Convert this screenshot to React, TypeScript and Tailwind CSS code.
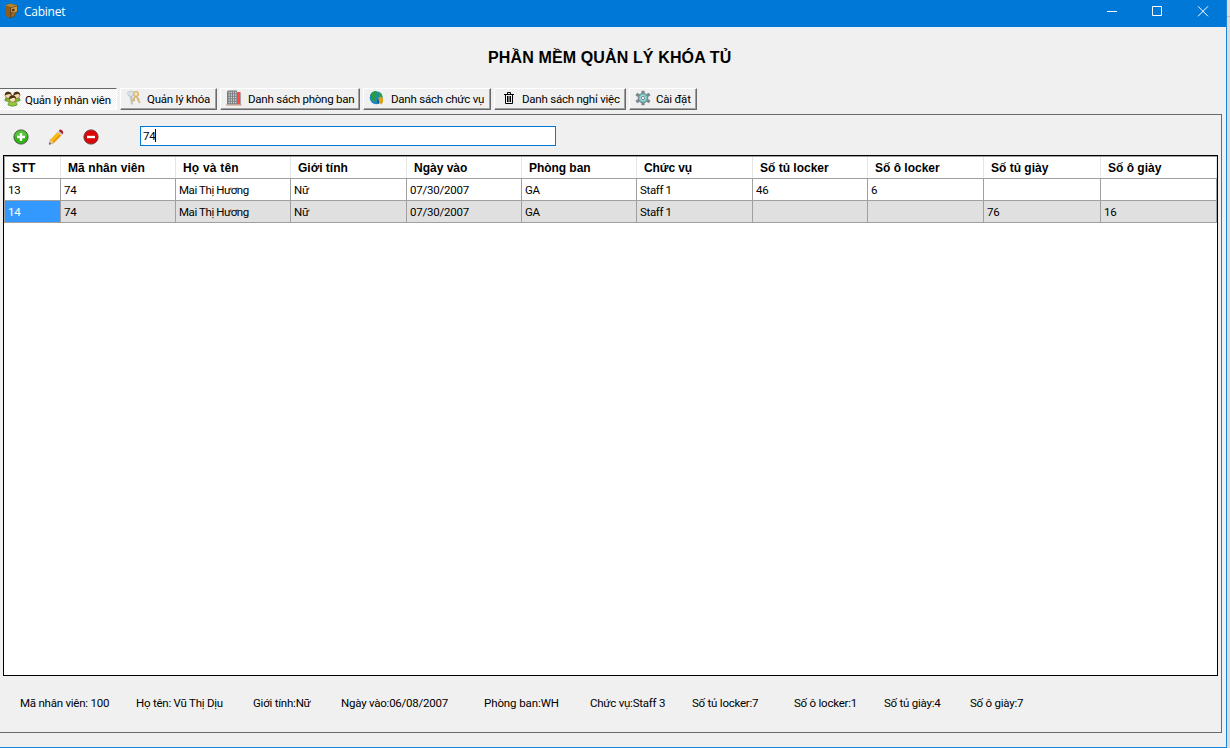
import type { ReactNode } from "react";

function PeopleIcon() {
  return (
    <svg width="17" height="16" viewBox="0 0 17 16" className="block">
      <path d="M0.8 9.5q0-3 3.4-3t3.4 3q-3.4 2-6.8 0zM9.4 9.5q0-3 3.4-3t3.4 3q-3.4 2-6.8 0z" fill="#7db82c" stroke="#4d7a18" strokeWidth="0.6" />
      <circle cx="4.2" cy="4.2" r="3.1" fill="#f3d9ae" stroke="#7a5520" strokeWidth="0.6" />
      <circle cx="12.8" cy="4.2" r="3.1" fill="#f3d9ae" stroke="#7a5520" strokeWidth="0.6" />
      <path d="M0.8 4.2Q0.9 0.5 4.2 0.7T7.6 4.2Q6 2.6 4.2 3.2T0.8 4.2zM9.4 4.2Q9.5 0.5 12.8 0.7T16.2 4.2Q14.6 2.6 12.8 3.2T9.4 4.2z" fill="#4a2f12" />
      <path d="M4 14q0-4 4.5-4t4.5 4q-4.5 2.6-9 0z" fill="#8fcb3a" stroke="#4d7a18" strokeWidth="0.6" />
      <circle cx="8.5" cy="8" r="3.2" fill="#f8dfb8" stroke="#7a5520" strokeWidth="0.6" />
      <path d="M5 8Q5.2 4.2 8.5 4.3T12 8Q10.3 6.2 8.5 6.9T5 8z" fill="#4a2f12" />
    </svg>
  );
}

function KeysIcon() {
  return (
    <svg width="16" height="16" viewBox="0 0 16 16" className="block">
      <path d="M4.2 6L5.4 13.5L6.3 14.5L6 5.5z" fill="#cbd3d9" stroke="#a9b4bb" strokeWidth="0.7" />
      <path d="M1.5 2.5Q4 0.4 7.5 1.8L8 4.5L5.5 6.5L2.5 6z" fill="#dbe3e8" stroke="#b8c2c9" strokeWidth="0.8" />
      <path d="M9.5 6L6.2 11.5M10.3 6L13.8 13" stroke="#d9b878" strokeWidth="1.7" />
      <circle cx="10" cy="4" r="2.4" fill="#f3e5c3" stroke="#d8b56c" strokeWidth="1.3" />
      <path d="M7.5 9.5L9 10.8M12 9.5L13.4 8.8" stroke="#d1a75c" strokeWidth="1.1" />
    </svg>
  );
}

function BuildingIcon() {
  return (
    <svg width="16" height="16" viewBox="0 0 16 16" className="block">
      <path d="M1 1.5L2.5 0.5H11L11.5 14.5H1z" fill="#777b7c" />
      <path d="M11 2H14.5L15 14.5H11z" fill="#ff4547" />
      <path d="M14.6 3V14.5" stroke="#a6a9aa" />
      <path d="M2.5 2.5H11M2.5 5H11M2.5 7.5H11M2.5 10H11M2.5 12.5H11" stroke="#d5d8d8" strokeWidth="1.3" strokeDasharray="1.3 0.9" />
      <path d="M0 15H15.5" stroke="#b9947b" strokeWidth="1" />
    </svg>
  );
}

function GlobeIcon() {
  return (
    <svg width="16" height="16" viewBox="0 0 16 16" className="block">
      <circle cx="7.2" cy="7.7" r="6.5" fill="#168ac4" />
      <path d="M1.3 5Q3 1.2 7 1.1L8.2 3L6.5 4.5L8 6.5L6.3 9L5.8 12L3.5 10.5L2.5 7.5z" fill="#2c9a44" />
      <path d="M9.5 2L12.5 4L13.5 7L11 8L9.2 5.5z" fill="#2fa04a" />
      <path d="M9.5 8L11.5 6.5L14 8V12L12.5 14.5L10.5 13L9.5 11z" fill="#d6a21c" />
      <path d="M8.8 9.5L9.3 13.5" stroke="#123f82" strokeWidth="1.2" />
    </svg>
  );
}

function TrashIcon() {
  return (
    <svg width="12" height="14" viewBox="0 0 12 14" className="block" fill="none" stroke="#000" strokeWidth="1">
      <path d="M1 3.5H11M4.5 3V1.5H7.5V3M2.5 3.5V12.5H9.5V3.5M4.5 5V11M6 5V11M7.5 5V11" />
    </svg>
  );
}

function GearIcon() {
  return (
    <svg width="16" height="16" viewBox="0 0 16 16" className="block">
      <g stroke="#7b878b" strokeWidth="3.2">
        <path d="M8 0.8V15.2M1.3 4.2L14.7 11.8M1.3 11.8L14.7 4.2" />
      </g>
      <circle cx="8" cy="8" r="5.3" fill="#7d8a8f" />
      <circle cx="8" cy="8" r="3.6" fill="#a9dcd9" stroke="#6fc4c0" strokeWidth="1.3" />
      <circle cx="8" cy="8" r="1.7" fill="#eef2f2" stroke="#60757a" strokeWidth="0.8" />
    </svg>
  );
}

function CabinetIcon() {
  return (
    <svg width="16" height="16" viewBox="0 0 16 16" className="block">
      <path d="M1 2.5L6 0.5L13.8 2.5V9L11 10.5V13L6.5 15.5L1.5 12.5z" fill="#6b451c" />
      <path d="M1 2.5L6 0.5L13.8 2.5L7 4.5z" fill="#b5832c" />
      <path d="M1 2.7L6 4.5V15L1.5 12.5z" fill="#8c5c1e" />
      <path d="M7.2 5L13 3.6V8.2L10.5 9.8L7.2 9z" fill="#d29b3c" />
      <path d="M8 6.2L10.5 5.6V8.2L8 8.3z" fill="#4c3420" />
      <path d="M7.2 10.5L10.5 10V12.6L7.2 14.2z" fill="#9c6b27" />
    </svg>
  );
}

function AddIcon() {
  return (
    <svg width="16" height="16" viewBox="0 0 16 16" className="block">
      <circle cx="8" cy="8" r="7.1" fill="#2fb414" stroke="#4e5b4a" strokeWidth="1" />
      <path d="M2 7.5A6 6 0 0 1 14 7.5Q8 9.5 2 7.5z" fill="#6bd04c" opacity="0.6" />
      <path d="M8 4V12M4 8H12" stroke="#fff" strokeWidth="2.4" />
    </svg>
  );
}

function PencilIcon() {
  return (
    <svg width="16" height="16" viewBox="0 0 16 16" className="block">
      <path d="M1 15.5L2.3 10.5L5.8 14z" fill="#eccb9c" stroke="#b89263" strokeWidth="0.5" />
      <path d="M1 15.5L1.6 13.3L3.3 14.9z" fill="#555" />
      <path d="M2.3 10.5L9.5 3L13.3 6.5L5.8 14z" fill="#fbb917" />
      <path d="M4.8 12.5L11.8 5.2L13.3 6.5L5.8 14z" fill="#e89b12" />
      <path d="M9.5 3L10.8 1.7L14.5 5.2L13.3 6.5z" fill="#c9ccd0" />
      <path d="M10.8 1.7L12 0.5Q15 0.8 15.2 4L14.5 5.2z" fill="#a81e2c" />
    </svg>
  );
}

function RemoveIcon() {
  return (
    <svg width="16" height="16" viewBox="0 0 16 16" className="block">
      <circle cx="8" cy="8" r="7.1" fill="#dc0508" stroke="#6b3a3a" strokeWidth="1" />
      <path d="M4 8H12" stroke="#fff" strokeWidth="2.4" />
    </svg>
  );
}

type TabProps = { width: string; icon: ReactNode; iconBox: string; label: string; active?: boolean };

function Tab({ width, icon, iconBox, label, active }: TabProps) {
  const look = active
    ? "border-t border-r border-b border-t-[#696969] border-r-white border-b-white bg-[repeating-conic-gradient(#fff_0_25%,#f0f0f0_0_50%)] bg-[length:2px_2px]"
    : "border border-t-white border-l-white border-r-[#696969] border-b-[#696969] bg-[#f0f0f0] shadow-[inset_-1px_-1px_0_#a0a0a0]";
  return (
    <button className={`flex h-[22px] shrink-0 items-start whitespace-nowrap ${width} ${look}`}>
      <span className={`shrink-0 ${iconBox}`}>{icon}</span>
      <span className={`leading-[14px] ${active ? "pt-[4px]" : "pt-[3px]"}`}>{label}</span>
    </button>
  );
}

const columns = [
  { title: "STT", width: "w-[56px]", heading: "tracking-[0.3px]", cell: "" },
  { title: "Mã nhân viên", width: "w-[115px]", heading: "tracking-[0.08px]", cell: "" },
  { title: "Họ và tên", width: "w-[115px]", heading: "tracking-[0.2px]", cell: "tracking-[-0.42px]" },
  { title: "Giới tính", width: "w-[116px]", heading: "", cell: "" },
  { title: "Ngày vào", width: "w-[115px]", heading: "", cell: "" },
  { title: "Phòng ban", width: "w-[115px]", heading: "tracking-[-0.05px]", cell: "" },
  { title: "Chức vụ", width: "w-[116px]", heading: "tracking-[-0.1px]", cell: "tracking-[-0.35px]" },
  { title: "Số tủ locker", width: "w-[115px]", heading: "", cell: "" },
  { title: "Số ô locker", width: "w-[116px]", heading: "", cell: "" },
  { title: "Số tủ giày", width: "w-[117px]", heading: "", cell: "" },
  { title: "Số ô giày", width: "w-[116px]", heading: "", cell: "" },
];

const rows = [
  ["13", "74", "Mai Thị Hương", "Nữ", "07/30/2007", "GA", "Staff 1", "46", "6", "", ""],
  ["14", "74", "Mai Thị Hương", "Nữ", "07/30/2007", "GA", "Staff 1", "", "", "76", "16"],
];

const details = [
  { text: "Mã nhân viên: 100", box: "w-[116px]" },
  { text: "Họ tên: Vũ Thị Dịu", box: "w-[117px]" },
  { text: "Giới tính:Nữ", box: "w-[88px]" },
  { text: "Ngày vào:06/08/2007", box: "w-[143px]" },
  { text: "Phòng ban:WH", box: "w-[106px] tracking-[-0.1px]" },
  { text: "Chức vụ:Staff 3", box: "w-[102px]" },
  { text: "Số tủ locker:7", box: "w-[102px]" },
  { text: "Số ô locker:1", box: "w-[90px]" },
  { text: "Số tủ giày:4", box: "w-[86px]" },
  { text: "Số ô giày:7", box: "w-[80px]" },
];

export default function App() {
  return (
    <div className="flex h-[748px] w-[1230px] overflow-hidden bg-[#d8dadc] font-[Roboto,sans-serif] text-[11.5px] tracking-[-0.23px] text-black">
      <div className="flex w-[1227px] flex-col border-r border-b border-[#1883d7] bg-[#f0f0f0]">
        <header className="flex h-[27px] shrink-0 items-start bg-[#0078d7] text-white">
          <div className="pt-[3px] pl-[4px]"><CabinetIcon /></div>
          <span className="pt-1 pl-1 font-['Open_Sans',sans-serif] text-[12px] leading-4 tracking-[-0.25px]">Cabinet</span>
          <div className="ml-auto flex pt-[6px] pr-[17px]">
            <svg width="102" height="11" viewBox="0 0 102 11" fill="none" stroke="#fff">
              <path d="M0 5.5H10M45.5 0.5H54.5V9.5H45.5zM91 0.3L101 10.3M101 0.3L91 10.3" />
            </svg>
          </div>
        </header>
        <h1 className="h-[61px] shrink-0 pt-[21px] pl-[488px] font-['Liberation_Sans',Arial,sans-serif] text-[16px] leading-[20px] font-bold tracking-[0.13px] whitespace-nowrap">PHẦN MỀM QUẢN LÝ KHÓA TỦ</h1>
        <nav className="flex h-[26px] shrink-0 items-start">
          <Tab width="w-[117px]" icon={<PeopleIcon />} iconBox="w-[25px] pl-1 pt-[2px]" label="Quản lý nhân viên" active />
          <div className="ml-[3px] flex gap-[3px]">
            <Tab width="w-[97px]" icon={<KeysIcon />} iconBox="w-[26px] pl-[5px] pt-[1px]" label="Quản lý khóa" />
            <Tab width="w-[140px]" icon={<BuildingIcon />} iconBox="w-[27px] pl-[5px] pt-[1px]" label="Danh sách phòng ban" />
            <Tab width="w-[128px]" icon={<GlobeIcon />} iconBox="w-[27px] pl-[5px] pt-[1px]" label="Danh sách chức vụ" />
            <Tab width="w-[132px]" icon={<TrashIcon />} iconBox="w-[27px] pl-[8px] pt-[2px]" label="Danh sách nghỉ việc" />
            <Tab width="w-[68px]" icon={<GearIcon />} iconBox="w-[26px] pl-[5px] pt-[1px]" label="Cài đặt" />
          </div>
        </nav>
        <main className="flex h-[619px] w-[1222px] shrink-0 flex-col border-t border-r border-b border-[#696969]">
          <div className="flex h-[40px] shrink-0 items-start pl-[13px]">
            <button className="mt-[14px]"><AddIcon /></button>
            <button className="mt-[14px] ml-[19px]"><PencilIcon /></button>
            <button className="mt-[14px] ml-[19px]"><RemoveIcon /></button>
            <div className="mt-[11px] ml-[41px] flex h-5 w-[416px] border border-[#0078d7] bg-white pl-[2px]">
              <span className="w-[12px] pt-[2px] leading-[14px]">74</span>
              <span className="mt-[2px] h-[13px] w-px bg-black" />
            </div>
          </div>
          <div className="ml-[3px] flex h-[521px] w-[1215px] shrink-0 flex-col border border-black bg-white">
            <div className="flex h-[23px] w-[1213px] shrink-0 border-t border-b border-l border-[#a0a0a0] font-['Liberation_Sans',Arial,sans-serif] text-[12px] font-bold tracking-normal">
              {columns.map((c) => (
                <div key={c.title} className={`shrink-0 border-r border-[#e5e5e5] pt-[4px] pl-[7px] leading-[14px] whitespace-nowrap ${c.width}`}>
                  <span className={c.heading}>{c.title}</span>
                </div>
              ))}
            </div>
            {rows.map((r, ri) => (
              <div key={ri} className={`flex h-[22px] w-[1213px] shrink-0 border-b border-l border-[#a0a0a0] ${ri === 1 ? "bg-[#e0e0e0]" : ""}`}>
                {r.map((v, ci) => (
                  <div key={ci} className={`shrink-0 border-r border-[#a0a0a0] pt-[4px] pl-[3px] leading-[14px] whitespace-nowrap ${columns[ci].width} ${columns[ci].cell} ${ri === 1 && ci === 0 ? "bg-[#3399ff] text-white" : ""}`}>{v}</div>
                ))}
              </div>
            ))}
          </div>
          <footer className="flex pt-[20px] pl-[20px] leading-[14px] whitespace-nowrap">
            {details.map((d) => (
              <span key={d.text} className={`shrink-0 ${d.box}`}>{d.text}</span>
            ))}
          </footer>
        </main>
      </div>
      <div className="h-full w-[3px] bg-[#dcdcdc] pt-4"><div className="h-px bg-[#bcbcbc]" /></div>
    </div>
  );
}
